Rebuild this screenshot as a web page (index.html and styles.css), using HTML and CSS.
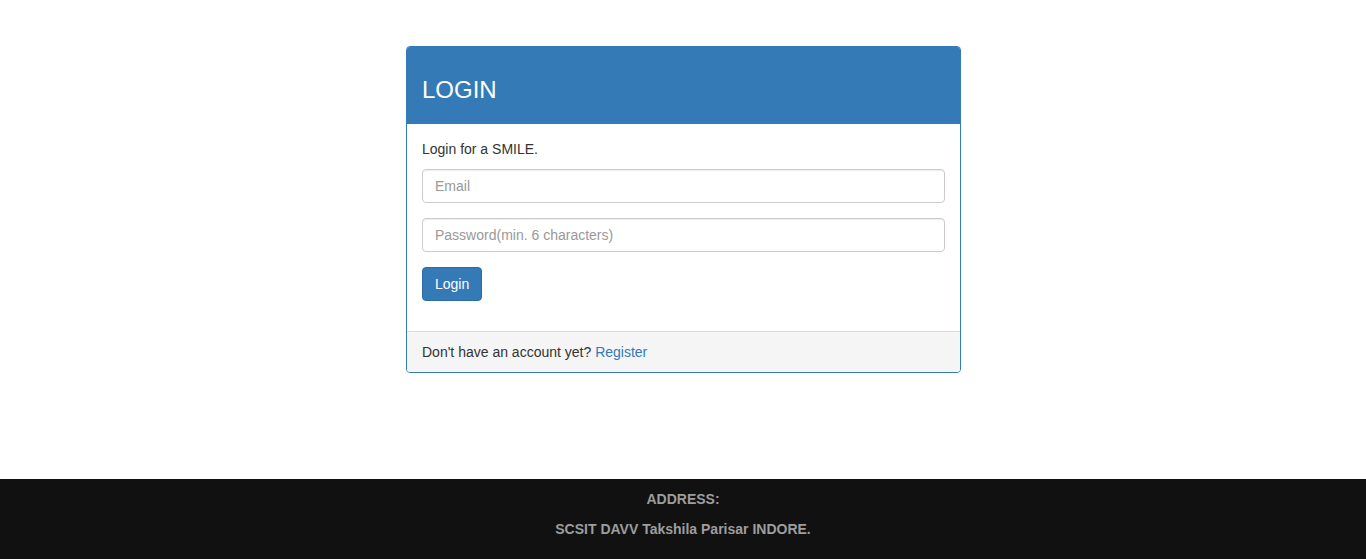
FILE: index.html
```html
<!DOCTYPE html>
<html>
<head>
<meta charset="utf-8">
<title>Login</title>
<link rel="stylesheet" href="styles.css">
</head>
<body>
<main class="page">
  <div class="container">
    <div class="panel">
      <div class="panel-heading">
        <h3 class="panel-title">LOGIN</h3>
      </div>
      <div class="panel-body">
        <p class="intro">Login for a SMILE.</p>
        <form class="login-form">
          <div class="form-group">
            <input class="form-control" type="email" placeholder="Email">
          </div>
          <div class="form-group">
            <input class="form-control" type="password" placeholder="Password(min. 6 characters)">
          </div>
          <div class="form-group">
            <button class="btn" type="button">Login</button>
          </div>
        </form>
      </div>
      <div class="panel-footer">
        Don't have an account yet? <a class="link" href="#">Register</a>
      </div>
    </div>
  </div>
</main>
<footer class="site-footer">
  <p class="footer-line">ADDRESS:</p>
  <p class="footer-line">SCSIT DAVV Takshila Parisar INDORE.</p>
</footer>
</body>
</html>
```

FILE: styles.css
```css
* { box-sizing: border-box; }
html, body { margin: 0; padding: 0; }
body {
  font-family: "Liberation Sans", Arial, sans-serif;
  font-size: 14px;
  line-height: 20px;
  color: #333;
  background: #fff;
  min-height: 100vh;
  display: flex;
  flex-direction: column;
}
.page { flex: 0 0 auto; }
.container {
  width: 555px;
  margin: 46px auto 0;
  position: relative;
  left: 0.5px;
}
.panel {
  border: 1px solid #337ab7;
  border-radius: 4px;
  background: #fff;
  overflow: hidden;
}
.panel-heading {
  background: #337ab7;
  color: #fff;
  padding: 10px 15px 11px;
}
.panel-title {
  margin: 20px 0 10px;
  font-size: 24px;
  font-weight: 500;
  line-height: 26.4px;
}
.panel-body { padding: 15px 15px 15px; }
.intro { margin: 0 0 10px; }
.login-form { margin: 0; }
.form-group { margin-bottom: 15px; }
.form-control {
  display: block;
  width: 100%;
  height: 34px;
  padding: 6px 12px;
  font-family: inherit;
  font-size: 14px;
  line-height: 20px;
  color: #555;
  background: #fff;
  border: 1px solid #ccc;
  border-radius: 4px;
  box-shadow: inset 0 1px 1px rgba(0,0,0,.075);
  outline: none;
}
.form-control::placeholder { color: #999; opacity: 1; }
.btn {
  display: inline-block;
  padding: 6px 12px;
  font-family: inherit;
  font-size: 14px;
  line-height: 20px;
  color: #fff;
  background: #337ab7;
  border: 1px solid #2e6da4;
  border-radius: 4px;
  cursor: pointer;
}
.panel-footer {
  background: #f5f5f5;
  border-top: 1px solid #ddd;
  padding: 10px 15px;
}
.link { color: #337ab7; text-decoration: none; }
.site-footer {
  margin-top: auto;
  background: #111;
  color: #9d9d9d;
  text-align: center;
  font-weight: bold;
  padding: 10px 0;
}
.footer-line { margin: 0 0 10px; }
```
